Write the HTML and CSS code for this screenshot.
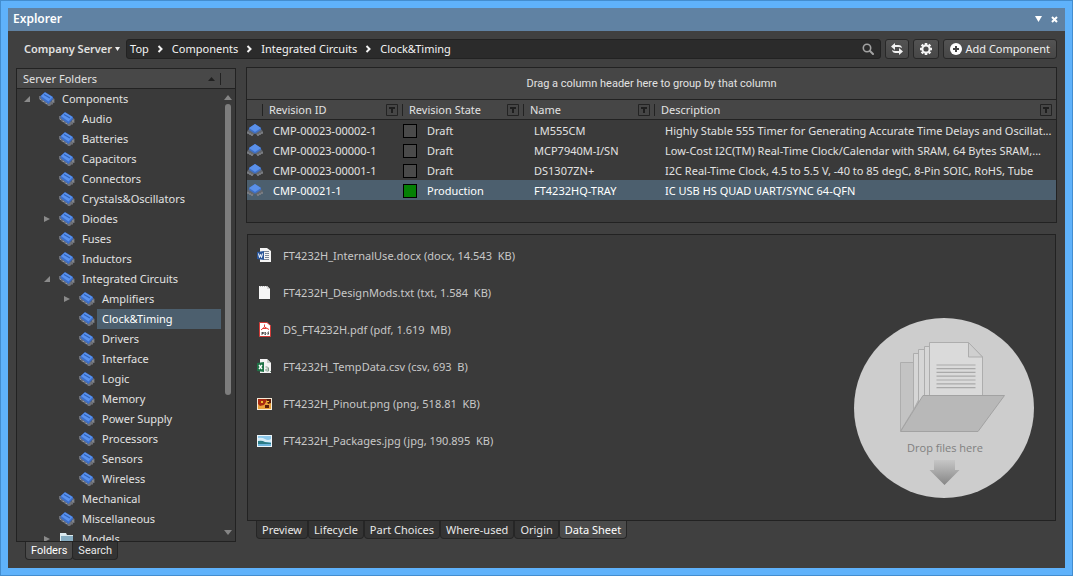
FILE: index.html
```html
<!DOCTYPE html>
<html lang="en">
<head>
<meta charset="utf-8">
<title>Explorer</title>
<link rel="stylesheet" href="styles.css">
</head>
<body>
<svg class="sprite" aria-hidden="true">
  <symbol id="chip" viewBox="0 0 16 14">
    <path d="M0 4h2l10 6 2-4 1.500 1v4H14v1.500h-1.500L11 14H9l-1-1.500-2-.5-1-1.500-2-.5-1-1.500L0 7z" fill="#6d7078"/>
    <path d="M1 7l1 1M4 9l1 1M7 11l1 1M14 8v2" stroke="#97999e" stroke-width="1"/>
    <path d="M1.500 4L6 0l8 5v2l-4.500 5L2 6.500z" fill="#3c70cc"/>
    <path d="M2 4L6 .5 13.500 5 9.500 9.500z" fill="#5a92ee"/>
    <path d="M5 2.500l6 3.500" stroke="#2f63bb" stroke-width="1.200"/>
  </symbol>
  <symbol id="part" viewBox="0 0 16 12">
    <path d="M2 5L0 7.500V9l5 3 3-2.500 3 2.500 5-3V7.500L14 5z" fill="#63666c"/>
    <path d="M1 8v2M3 9v2M5 10v2M15 8v2M13 9v2M11 10v2" stroke="#8f9196"/>
    <path d="M8 0l6 4v2L8.500 9.500h-1L2 6V4z" fill="#3f70c4"/>
    <path d="M8 0l6 4-6 4-6-4z" fill="#5a90ea"/>
  </symbol>
  <symbol id="open" viewBox="0 0 6 6"><path d="M6 0v6H0z" fill="#8a8a8a"/></symbol>
  <symbol id="closed" viewBox="0 0 6 6"><path d="M0 0l6 3-6 3z" fill="#8a8a8a"/></symbol>
  <symbol id="chev" viewBox="0 0 6 8"><path d="M1 1l3 3-3 3" fill="none" stroke="#f4f4f4" stroke-width="2"/></symbol>
  <symbol id="filter" viewBox="0 0 12 12"><path d="M.5.5h11v11H.5z" fill="none" stroke="#232323"/><path d="M3 3h6v2H7v4H5V5H3z" fill="#1f1f1f"/></symbol>
</svg>

<main class="window">
  <header class="titlebar">
    <h1>Explorer</h1>
    <button class="cap" aria-label="Window menu"><svg width="7" height="6" viewBox="0 0 7 6"><path d="M0 0h7L3.500 6z" fill="#fff"/></svg></button>
    <button class="cap" aria-label="Close"><svg width="7" height="7" viewBox="0 0 7 7"><path d="M1 1l5 5M6 1L1 6" stroke="#fff" stroke-width="2"/></svg></button>
  </header>

  <div class="toolbar">
    <button class="server">Company Server <svg width="5" height="4" viewBox="0 0 5 4"><path d="M0 0h5L2.500 4z" fill="#eee"/></svg></button>
    <nav class="path" aria-label="Path">
      <a href="#">Top</a><svg class="chev"><use href="#chev"/></svg>
      <a href="#">Components</a><svg class="chev"><use href="#chev"/></svg>
      <a href="#">Integrated Circuits</a><svg class="chev"><use href="#chev"/></svg>
      <a href="#">Clock&amp;Timing</a>
      <button class="search" aria-label="Search"><svg width="12" height="12" viewBox="0 0 12 12"><circle cx="5" cy="5" r="3.700" fill="none" stroke="#a2a2a2" stroke-width="1.600"/><path d="M8 8l3 3" stroke="#a2a2a2" stroke-width="2" stroke-linecap="round"/></svg></button>
    </nav>
    <button class="tool refresh" aria-label="Refresh"><svg width="12" height="12" viewBox="0 0 12 12"><path d="M0 3.500L4 0v2h3.500q3 0 3.500 3-1.500-1-3.500-1H4v3zM12 8.500L8 12v-2H4.500Q1.500 10 1 7q1.500 1 3.500 1H8V5z" fill="#f2f2f2"/></svg></button>
    <button class="tool gear" aria-label="Settings"><svg width="12" height="12" viewBox="0 0 12 12"><g stroke="#f5f5f5" fill="none"><path d="M6 0v2M6 10v2M0 6h2M10 6h2M1.700 1.700l1.500 1.500M8.800 8.800l1.500 1.500M10.300 1.700L8.800 3.200M3.200 8.800l-1.500 1.500" stroke-width="2.600"/><circle cx="6" cy="6" r="3.600" stroke-width="2"/></g></svg></button>
    <button class="tool add"><svg width="12" height="12" viewBox="0 0 12 12"><circle cx="6" cy="6" r="6" fill="#fff"/><path d="M6 3v6M3 6h6" stroke="#444" stroke-width="2"/></svg>Add Component</button>
  </div>

  <div class="content">
    <section class="side">
      <div class="panel folders">
        <div class="folders-head"><h2>Server Folders</h2><svg width="7" height="4" viewBox="0 0 7 4"><path d="M0 4h7L3.500 0z" fill="#202020"/></svg><i class="rule"></i></div>
        <div class="folders-body">
          <ul class="tree">
            <li><div class="node"><button class="toggle" aria-label="Collapse"><svg><use href="#open"/></svg></button><svg class="chip"><use href="#chip"/></svg><a href="#">Components</a></div>
              <ul>
                <li><div class="node"><i class="toggle"></i><svg class="chip"><use href="#chip"/></svg><a href="#">Audio</a></div></li>
                <li><div class="node"><i class="toggle"></i><svg class="chip"><use href="#chip"/></svg><a href="#">Batteries</a></div></li>
                <li><div class="node"><i class="toggle"></i><svg class="chip"><use href="#chip"/></svg><a href="#">Capacitors</a></div></li>
                <li><div class="node"><i class="toggle"></i><svg class="chip"><use href="#chip"/></svg><a href="#">Connectors</a></div></li>
                <li><div class="node"><i class="toggle"></i><svg class="chip"><use href="#chip"/></svg><a href="#">Crystals&amp;Oscillators</a></div></li>
                <li><div class="node"><button class="toggle" aria-label="Expand"><svg><use href="#closed"/></svg></button><svg class="chip"><use href="#chip"/></svg><a href="#">Diodes</a></div></li>
                <li><div class="node"><i class="toggle"></i><svg class="chip"><use href="#chip"/></svg><a href="#">Fuses</a></div></li>
                <li><div class="node"><i class="toggle"></i><svg class="chip"><use href="#chip"/></svg><a href="#">Inductors</a></div></li>
                <li><div class="node"><button class="toggle" aria-label="Collapse"><svg><use href="#open"/></svg></button><svg class="chip"><use href="#chip"/></svg><a href="#">Integrated Circuits</a></div>
                  <ul>
                    <li><div class="node"><button class="toggle" aria-label="Expand"><svg><use href="#closed"/></svg></button><svg class="chip"><use href="#chip"/></svg><a href="#">Amplifiers</a></div></li>
                    <li><div class="node"><i class="toggle"></i><svg class="chip"><use href="#chip"/></svg><a href="#" class="selected">Clock&amp;Timing</a></div></li>
                    <li><div class="node"><i class="toggle"></i><svg class="chip"><use href="#chip"/></svg><a href="#">Drivers</a></div></li>
                    <li><div class="node"><i class="toggle"></i><svg class="chip"><use href="#chip"/></svg><a href="#">Interface</a></div></li>
                    <li><div class="node"><i class="toggle"></i><svg class="chip"><use href="#chip"/></svg><a href="#">Logic</a></div></li>
                    <li><div class="node"><i class="toggle"></i><svg class="chip"><use href="#chip"/></svg><a href="#">Memory</a></div></li>
                    <li><div class="node"><i class="toggle"></i><svg class="chip"><use href="#chip"/></svg><a href="#">Power Supply</a></div></li>
                    <li><div class="node"><i class="toggle"></i><svg class="chip"><use href="#chip"/></svg><a href="#">Processors</a></div></li>
                    <li><div class="node"><i class="toggle"></i><svg class="chip"><use href="#chip"/></svg><a href="#">Sensors</a></div></li>
                    <li><div class="node"><i class="toggle"></i><svg class="chip"><use href="#chip"/></svg><a href="#">Wireless</a></div></li>
                  </ul>
                </li>
                <li><div class="node"><i class="toggle"></i><svg class="chip"><use href="#chip"/></svg><a href="#">Mechanical</a></div></li>
                <li><div class="node"><i class="toggle"></i><svg class="chip"><use href="#chip"/></svg><a href="#">Miscellaneous</a></div></li>
                <li><div class="node"><button class="toggle" aria-label="Expand"><svg><use href="#closed"/></svg></button><svg class="chip" viewBox="0 0 16 14"><path d="M1 1h6l1 2h6v11H1z" fill="#dcebf0"/><path d="M2 4h12v10H2z" fill="#86adc2"/></svg><a href="#">Models</a></div></li>
              </ul>
            </li>
          </ul>
          <div class="scroll">
            <svg width="8" height="5" viewBox="0 0 8 5"><path d="M0 5h8L4 0z" fill="#858585"/></svg>
            <div class="track"><div class="thumb"></div></div>
            <svg width="8" height="5" viewBox="0 0 8 5"><path d="M0 0h8L4 5z" fill="#858585"/></svg>
          </div>
        </div>
      </div>
      <div class="tabs side-tabs" role="tablist">
        <button role="tab" class="active" aria-selected="true">Folders</button><button role="tab">Search</button>
      </div>
    </section>

    <section class="main">
      <div class="grid">
        <div class="group-hint">Drag a column header here to group by that column</div>
        <table>
          <colgroup><col class="c-icon"><col class="c-id"><col class="c-state"><col class="c-name"><col></colgroup>
          <thead>
            <tr>
              <td></td>
              <th><div class="th">Revision ID<svg class="filter"><use href="#filter"/></svg></div></th>
              <th><div class="th">Revision State<svg class="filter"><use href="#filter"/></svg></div></th>
              <th><div class="th">Name<svg class="filter"><use href="#filter"/></svg></div></th>
              <th><div class="th">Description<svg class="filter"><use href="#filter"/></svg></div></th>
            </tr>
          </thead>
          <tbody>
            <tr><td class="ic"><svg class="part"><use href="#part"/></svg></td><td>CMP-00023-00002-1</td><td class="st"><div class="state"><i class="box"></i>Draft</div></td><td>LM555CM</td><td class="desc">Highly Stable 555 Timer for Generating Accurate Time Delays and Oscillat...</td></tr>
            <tr><td class="ic"><svg class="part"><use href="#part"/></svg></td><td>CMP-00023-00000-1</td><td class="st"><div class="state"><i class="box"></i>Draft</div></td><td>MCP7940M-I/SN</td><td class="desc">Low-Cost I2C(TM) Real-Time Clock/Calendar with SRAM, 64 Bytes SRAM,...</td></tr>
            <tr><td class="ic"><svg class="part"><use href="#part"/></svg></td><td>CMP-00023-00001-1</td><td class="st"><div class="state"><i class="box"></i>Draft</div></td><td>DS1307ZN+</td><td class="desc">I2C Real-Time Clock, 4.5 to 5.5 V, -40 to 85 degC, 8-Pin SOIC, RoHS, Tube</td></tr>
            <tr class="current"><td class="ic"><svg class="part"><use href="#part"/></svg></td><td>CMP-00021-1</td><td class="st"><div class="state"><i class="box green"></i>Production</div></td><td>FT4232HQ-TRAY</td><td class="desc">IC USB HS QUAD UART/SYNC 64-QFN</td></tr>
          </tbody>
        </table>
      </div>

      <div class="panel detail">
        <ul class="files">
          <li><svg class="file" viewBox="0 0 15 15"><path d="M3 0h7l4 3v11H3z" fill="#f4f4f4"/><path d="M7 3.500h5M8 5.500h4M8 7.500h4M8 9.500h4M7 11.500h5" stroke="#7b8798"/><path d="M0 4l7-1v9l-7-1z" fill="#2a5699"/><path d="M1.500 5.500l1 4 1-3 1 3 1-4" fill="none" stroke="#fff"/></svg><a href="#">FT4232H_InternalUse.docx (docx, 14.543 &nbsp;KB)</a></li>
          <li><svg class="file" viewBox="0 0 15 15"><path d="M2 1h8l3 3v10H2z" fill="#f6f6f6"/><path d="M3 1.500h7" stroke="#bbb" stroke-dasharray="1 1"/><path d="M10 1v3h3z" fill="#d5d5d5"/></svg><a href="#">FT4232H_DesignMods.txt (txt, 1.584 &nbsp;KB)</a></li>
          <li><svg class="file" viewBox="0 0 15 15"><path d="M2.500.5H10l3.500 3v11h-11z" fill="#fff" stroke="#d23b37"/><path d="M7.500 2.500v2.500L4 8M7.500 5l4.500 2.500M5.500 6.500h4" fill="none" stroke="#e23b34"/><path d="M5 10v3M5 10.500h1.500v1H5M8 10v3q2-1 0-3M11 13v-3h1M11 11.500h1" fill="none" stroke="#333" stroke-width=".8"/></svg><a href="#">DS_FT4232H.pdf (pdf, 1.619 &nbsp;MB)</a></li>
          <li><svg class="file" viewBox="0 0 15 15"><path d="M3 0h7l4 4v10H3z" fill="#f4f4f4"/><path d="M10 0v4h4z" fill="#c7d1ca"/><path d="M8.500 8h2l1 1v3h-2l-1-1 1-1h2M13.500 12v1" fill="none" stroke="#7d9a88"/><path d="M0 4l7-1v10l-7-1z" fill="#1f7246"/><path d="M2 6l3 4M5 6l-3 4" stroke="#fff" stroke-width="1.300"/></svg><a href="#">FT4232H_TempData.csv (csv, 693 &nbsp;B)</a></li>
          <li><svg class="file" viewBox="0 0 15 15"><path d="M0 2h15v12H0z" fill="#f4ead6"/><path d="M1 3h13v10H1z" fill="#e9a03a"/><path d="M1 3h8v3l-2 3-4 1-2-2z" fill="#a82a10"/><path d="M9 3h5v4l-3 1zM8 9h4v3H8z" fill="#5b1d0b"/><path d="M4 5h2v2H4zM10 5h2v1h-2z" fill="#f2bd32"/></svg><a href="#">FT4232H_Pinout.png (png, 518.81 &nbsp;KB)</a></li>
          <li><svg class="file" viewBox="0 0 15 15"><path d="M0 2h15v12H0z" fill="#edf5f9"/><path d="M1 3h13v10H1z" fill="#8cc8ea"/><path d="M1 5q4-1 7 1t6 0v3H1z" fill="#d8edf7"/><path d="M1 8q4-1 7 1l6 1v1H1z" fill="#2c7c86"/><path d="M1 11h13v2H1z" fill="#6db4dc"/></svg><a href="#">FT4232H_Packages.jpg (jpg, 190.895 &nbsp;KB)</a></li>
        </ul>
        <svg class="drop" viewBox="0 0 180 180" role="img" aria-label="Drop files here">
          <defs><linearGradient id="fade" x1="0" y1="0" x2="0" y2="1"><stop offset="0" stop-color="#c6c6c6"/><stop offset="1" stop-color="#868686"/></linearGradient></defs>
          <circle cx="90" cy="90" r="90" fill="#cdcdcd"/>
          <g stroke="#adadad" stroke-width="1" stroke-linejoin="round">
            <path d="M46.500 113V44.500h20V80z" fill="#c3c3c3"/>
            <path d="M59.500 92V35.500h6V80z" fill="#d6d6d6"/>
            <path d="M64.500 85V31.500h7V78z" fill="#d6d6d6"/>
            <path d="M70.500 78V28.500h6V78z" fill="#d6d6d6"/>
            <path d="M75.500 78V24.500H114.500L128.500 39V78z" fill="#dadada"/>
            <path d="M114.500 24.500V39h14z" fill="#cfcfcf"/>
            <path d="M46.500 113.500L69 77.500H150.500L124 113.500z" fill="#b8b8b8" stroke="#a2a2a2"/>
          </g>
          <path d="M82.500 47h39M82.500 50.700h39M82.500 54.400h39M82.500 58.200h39M82.500 62h39M82.500 65.800h39M82.500 69.600h39" stroke="#a9a9a9" stroke-width="1.200"/>
          <text x="91" y="134" text-anchor="middle">Drop files here</text>
          <path d="M80 142h21v10h4.500L90.500 167 75.500 152H80z" fill="url(#fade)"/>
        </svg>
      </div>
      <div class="tabs main-tabs" role="tablist">
        <button role="tab">Preview</button><button role="tab">Lifecycle</button><button role="tab">Part Choices</button><button role="tab">Where-used</button><button role="tab">Origin</button><button role="tab" class="active" aria-selected="true">Data Sheet</button>
      </div>
    </section>
  </div>
</main>
</body>
</html>
```

FILE: styles.css
```css
* { box-sizing: border-box; }
body {
  margin: 0;
  font: 11px/20px "Noto Sans", "Open Sans", sans-serif;
  color: #e2e2e2;
  background: #404040;
}
button { font: inherit; color: inherit; background: none; border: 0; padding: 0; margin: 0; }
a { color: inherit; text-decoration: none; }
ul { list-style: none; margin: 0; padding: 0; }
h1, h2 { margin: 0; font-size: inherit; font-weight: normal; }
svg { display: block; flex: none; }
.sprite { position: absolute; width: 0; height: 0; }

.window {
  height: 100vh;
  display: flex;
  flex-direction: column;
  border: 1px solid #438dcf;
  outline: 7px solid #5fb2fb;
  outline-offset: -8px;
  padding: 7px;
}
.titlebar {
  flex: none;
  height: 23px;
  padding: 0 7px 1px 5px;
  display: flex;
  align-items: center;
  gap: 9px;
  background: #6082a3;
  color: #fff;
}
.titlebar h1 { flex: 1; font-size: 12px; font-weight: 600; }
.cap { width: 7px; height: 7px; }

.toolbar {
  flex: none;
  display: flex;
  gap: 4px;
  padding: 8px 8px 8px 16px;
}
.server { display: flex; align-items: center; gap: 3px; margin-right: 2px; font-weight: 600; }
.path {
  flex: 1;
  height: 20px;
  display: flex;
  align-items: center;
  gap: 8px;
  padding: 0 6px 0 3px;
  background: #2b2b2b;
  border: 1px solid #222;
  border-radius: 3px;
  color: #f4f4f4;
}
.chev { width: 7px; height: 8px; }
.search { margin-left: auto; }
.tool {
  height: 20px;
  display: flex;
  align-items: center;
  justify-content: center;
  gap: 3px;
  background: linear-gradient(#535353, #474747);
  border: 1px solid #282828;
  border-radius: 3px;
  color: #f0f0f0;
}
.refresh { width: 24px; }
.gear { width: 26px; }
.add { padding: 0 6px; }

.content { flex: 1; min-height: 0; display: flex; gap: 10px; padding: 0 8px; }
.side { width: 220px; flex: none; display: flex; flex-direction: column; padding-bottom: 8px; }
.panel { flex: 1; min-height: 0; background: #3a3a3a; border: 1px solid #222; }
.folders { display: flex; flex-direction: column; margin-top: 1px; }
.folders-head {
  flex: none;
  height: 20px;
  display: flex;
  align-items: center;
  padding: 0 14px 0 6px;
  background: #484848;
  border-bottom: 1px solid #222;
}
.folders-head h2 { flex: 1; }
.rule { width: 1px; height: 12px; margin-left: 5px; background: #222; }
.folders-body { flex: 1; min-height: 0; display: flex; }
.tree { flex: 1; overflow: hidden; }
.tree ul { padding-left: 20px; }
.node { display: flex; align-items: center; height: 20px; }
.toggle { flex: none; width: 22px; height: 20px; display: flex; align-items: center; padding-left: 7px; }
.toggle svg { width: 6px; height: 6px; }
.chip { width: 16px; height: 14px; margin-right: 2px; }
.node a { flex: 1; padding-left: 5px; white-space: nowrap; }
.node .selected { background: #4c5f6e; color: #fff; }
.scroll { flex: none; width: 14px; display: flex; flex-direction: column; align-items: center; padding: 6px 0; gap: 4px; }
.track { flex: 1; width: 6px; }
.thumb { height: 69%; border-radius: 3px; background: #7d7d7d; }

.tabs { flex: none; display: flex; padding-left: 10px; }
.tabs button {
  height: 18px;
  line-height: 17px;
  padding: 0 5px;
  margin-left: -1px;
  background: #343434;
  border: 1px solid #262626;
  border-top: 0;
  border-radius: 0 0 4px 4px;
  color: #e8e8e8;
}
.tabs .active { background: #4b4b4b; color: #fff; }
.side-tabs button { font-family: Roboto, sans-serif; }
.main-tabs { padding-left: 11px; }
.main-tabs button + button { margin-left: 0; }

.main { flex: 1; min-width: 0; display: flex; flex-direction: column; padding-bottom: 29px; }
.grid { flex: none; height: 156px; background: #3a3a3a; border: 1px solid #222; overflow: hidden; }
.group-hint {
  height: 32px;
  line-height: 31px;
  text-align: center;
  background: #464646;
  border-bottom: 1px solid #222;
  font-family: Roboto, sans-serif;
}
table { width: 100%; table-layout: fixed; border-collapse: separate; border-spacing: 0; }
.c-icon { width: 15px; }
.c-id { width: 140px; }
.c-state { width: 121px; }
.c-name { width: 131px; }
thead td, th { height: 20px; padding: 0; background: #464646; border-bottom: 1px solid #222; }
th { font-weight: normal; text-align: left; }
.th {
  display: flex;
  align-items: center;
  justify-content: space-between;
  height: 12px;
  padding: 0 4px 0 6px;
  border-left: 1px solid #222;
}
.filter { width: 12px; height: 12px; }
tbody td {
  height: 20px;
  line-height: 18px;
  padding: 2px 11px 0;
  white-space: nowrap;
  overflow: hidden;
  text-overflow: ellipsis;
}
tbody .ic { padding: 0; overflow: visible; }
tbody .st { padding: 2px 1px 0; }
tbody .desc { padding-right: 2px; }
.part { width: 16px; height: 12px; }
.state { display: flex; align-items: center; gap: 10px; }
.box { width: 14px; height: 14px; background: #4a4a4a; border: 1px solid #000; }
.green { background: #048004; }
.current td { background: #4c5f6e; color: #fff; }

.detail { display: flex; justify-content: space-between; align-items: flex-end; margin: 11px 1px 0; }
.files { align-self: flex-start; padding: 2px 0 0 9px; color: #c8c8c8; }
.files li { display: flex; align-items: center; gap: 11px; height: 37px; }
.file { width: 15px; height: 15px; }
.drop { width: 180px; height: 180px; margin: 0 21px 22px 0; }
.drop text { font: 11px "Open Sans", sans-serif; fill: #808080; }
```
